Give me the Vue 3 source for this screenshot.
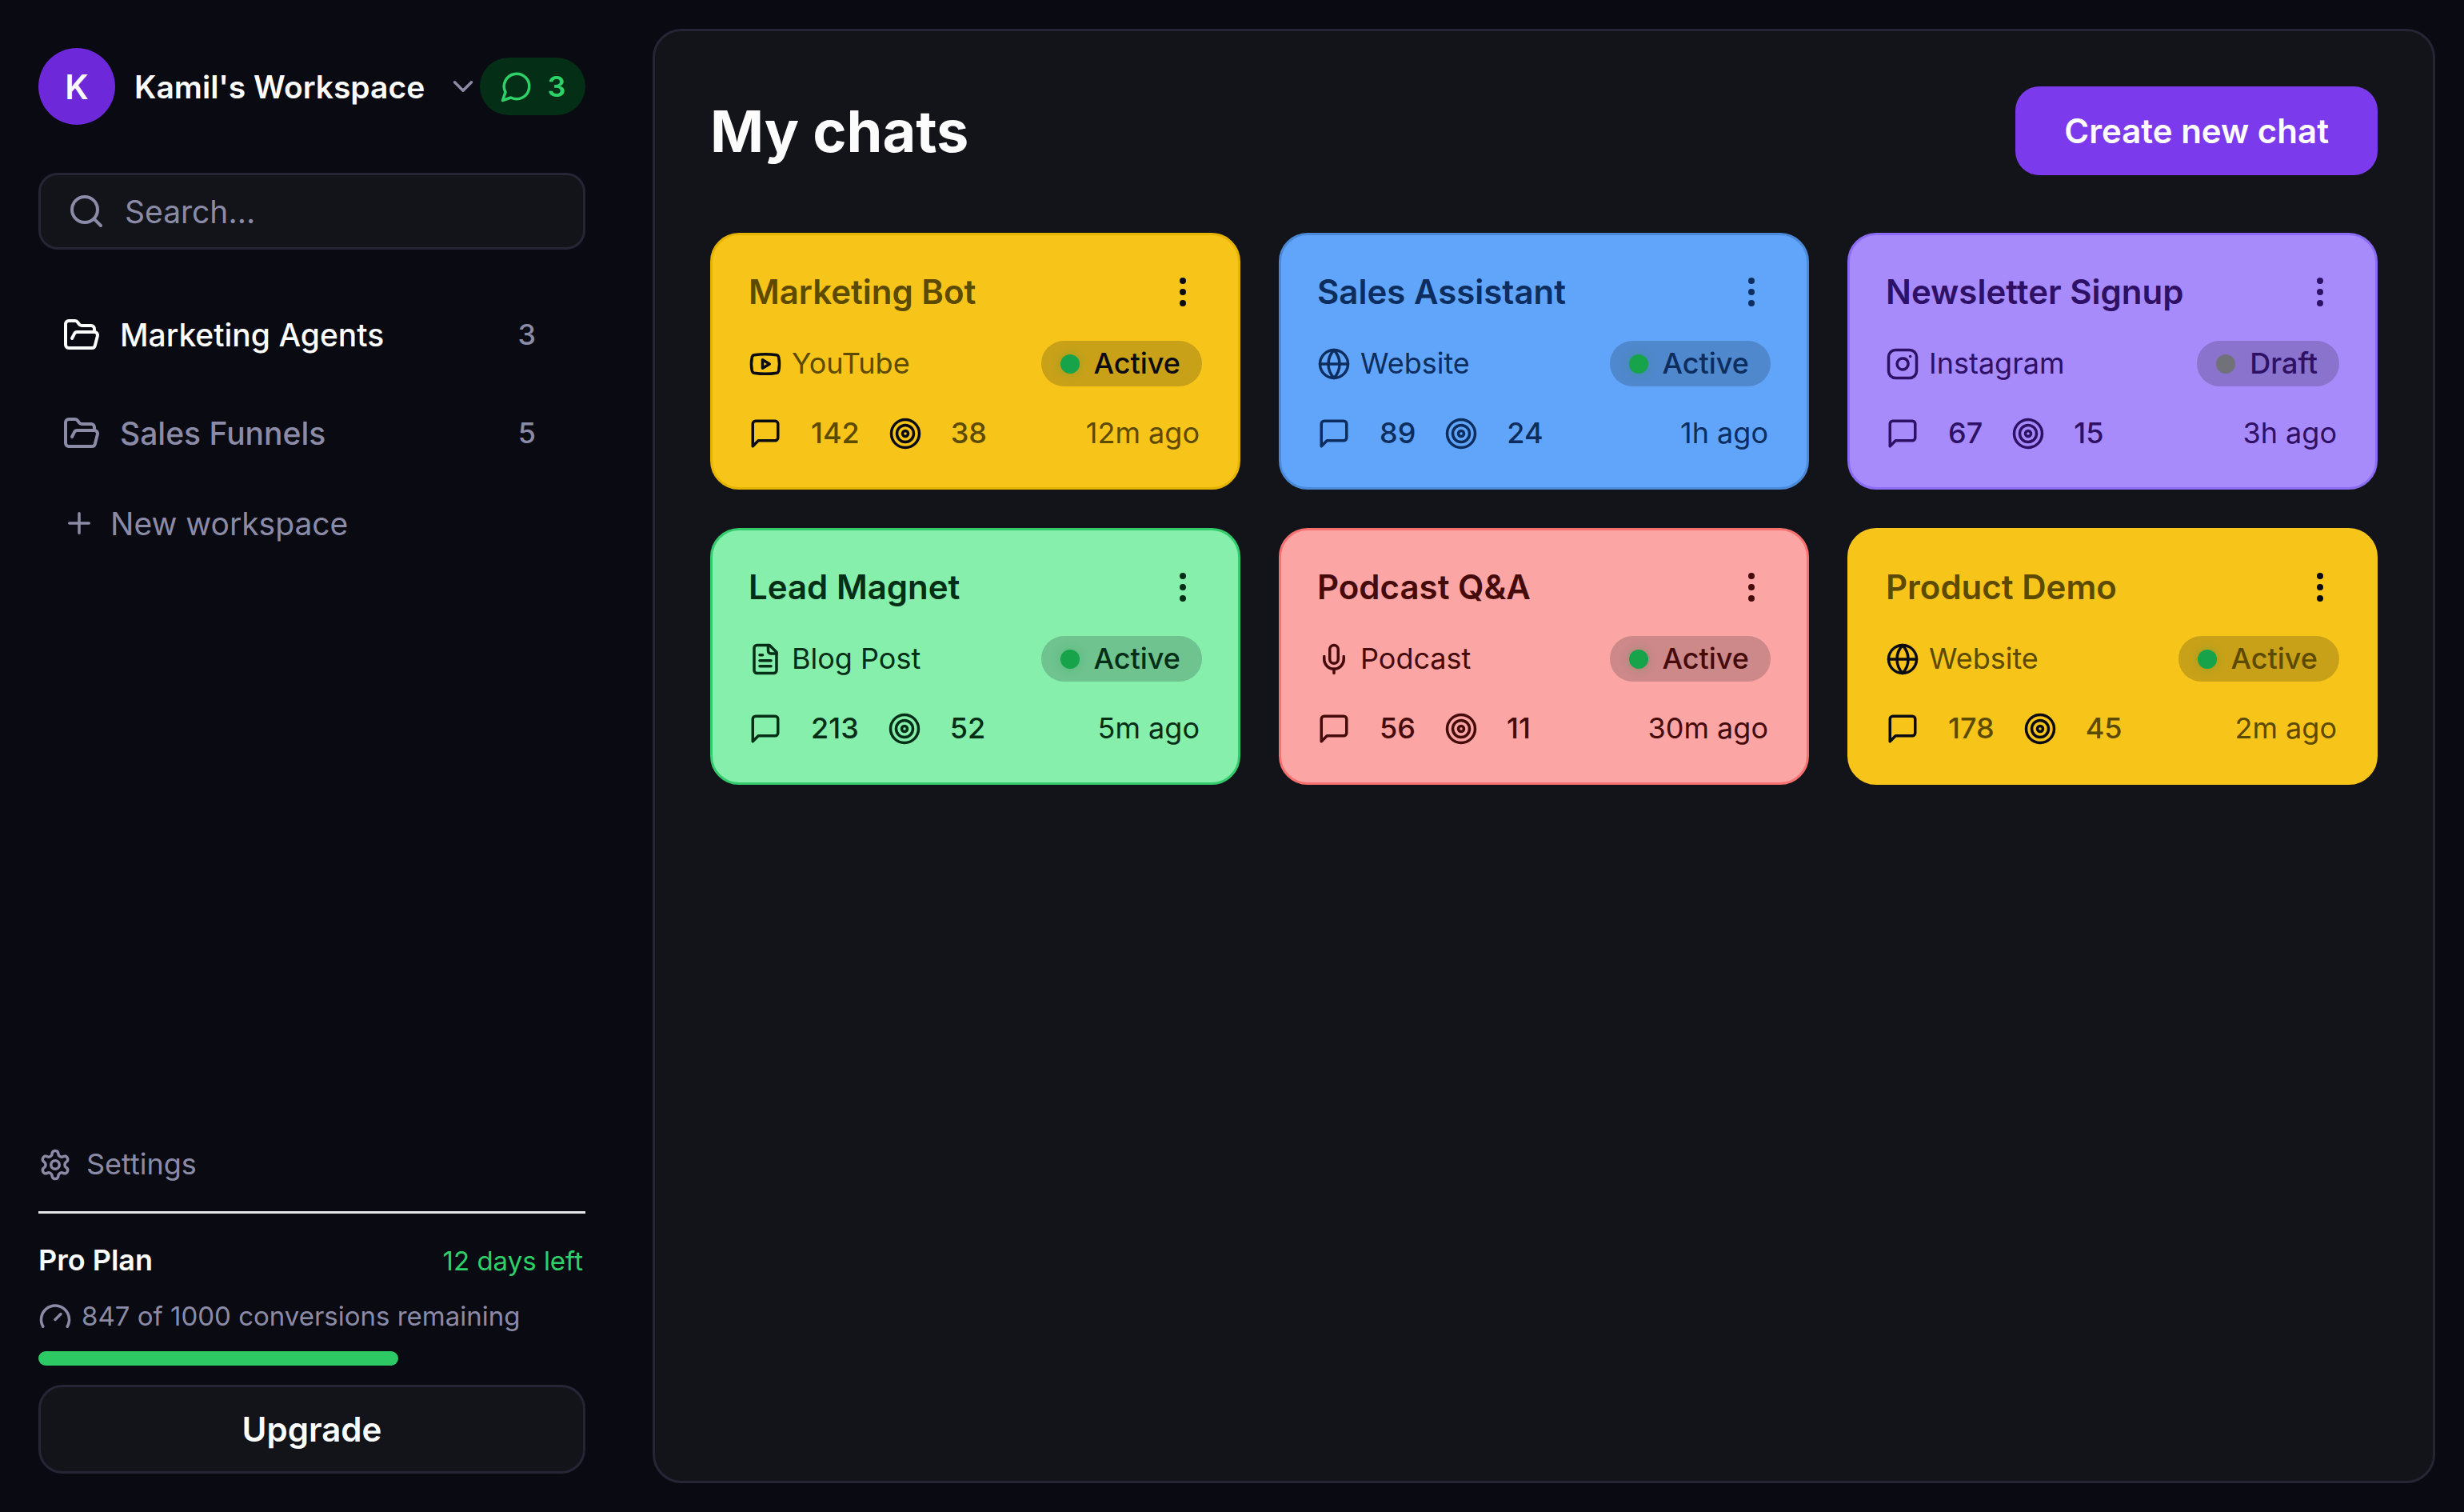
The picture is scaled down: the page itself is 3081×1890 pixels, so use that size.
<template>
  <div class="app">
    <aside class="sidebar">
      <div class="workspace">
        <button class="workspace-switch" type="button">
          <span class="avatar">K</span>
          <span class="workspace-name">Kamil's Workspace</span>
          <svg class="icon chevron" viewBox="0 0 24 24" aria-hidden="true"><path d="m6 9 6 6 6-6" /></svg>
        </button>
        <button class="inbox" type="button" aria-label="3 open chats">
          <svg class="icon" viewBox="0 0 24 24" aria-hidden="true"><path d="M7.9 20A9 9 0 1 0 4 16.1L2 22Z" /></svg>
          <span>3</span>
        </button>
      </div>

      <label class="search">
        <svg class="icon icon-lg" viewBox="0 0 24 24" aria-hidden="true">
          <circle cx="11" cy="11" r="8" />
          <path d="m21 21-4.3-4.3" />
        </svg>
        <input v-model="query" type="search" placeholder="Search..." aria-label="Search" />
      </label>

      <nav class="nav">
        <a
          v-for="folder in folders"
          :key="folder.name"
          href="#"
          class="nav-item"
          :class="{ current: folder.name === currentFolder }"
          @click.prevent="currentFolder = folder.name"
        >
          <svg class="icon icon-lg" viewBox="0 0 24 24" aria-hidden="true">
            <path d="m6 14 1.5-2.9A2 2 0 0 1 9.24 10H20a2 2 0 0 1 1.94 2.5l-1.54 6a2 2 0 0 1-1.95 1.5H4a2 2 0 0 1-2-2V5a2 2 0 0 1 2-2h3.9a2 2 0 0 1 1.69.9l.81 1.2a2 2 0 0 0 1.67.9H18a2 2 0 0 1 2 2v2" />
          </svg>
          <span class="nav-label">{{ folder.name }}</span>
          <span class="nav-count">{{ folder.count }}</span>
        </a>
        <button class="nav-new" type="button">
          <svg class="icon" viewBox="0 0 24 24" aria-hidden="true"><path d="M5 12h14M12 5v14" /></svg>
          <span>New workspace</span>
        </button>
      </nav>

      <div class="sidebar-bottom">
        <a class="settings" href="#">
          <svg class="icon" viewBox="0 0 24 24" aria-hidden="true">
            <path d="M12.22 2h-.44a2 2 0 0 0-2 2v.18a2 2 0 0 1-1 1.73l-.43.25a2 2 0 0 1-2 0l-.15-.08a2 2 0 0 0-2.73.73l-.22.38a2 2 0 0 0 .73 2.73l.15.1a2 2 0 0 1 1 1.72v.51a2 2 0 0 1-1 1.74l-.15.09a2 2 0 0 0-.73 2.73l.22.38a2 2 0 0 0 2.73.73l.15-.08a2 2 0 0 1 2 0l.43.25a2 2 0 0 1 1 1.73V20a2 2 0 0 0 2 2h.44a2 2 0 0 0 2-2v-.18a2 2 0 0 1 1-1.73l.43-.25a2 2 0 0 1 2 0l.15.08a2 2 0 0 0 2.73-.73l.22-.39a2 2 0 0 0-.73-2.73l-.15-.08a2 2 0 0 1-1-1.74v-.5a2 2 0 0 1 1-1.74l.15-.09a2 2 0 0 0 .73-2.73l-.22-.38a2 2 0 0 0-2.73-.73l-.15.08a2 2 0 0 1-2 0l-.43-.25a2 2 0 0 1-1-1.73V4a2 2 0 0 0-2-2z" />
            <circle cx="12" cy="12" r="3" />
          </svg>
          <span>Settings</span>
        </a>
        <div class="plan">
          <div class="plan-head">
            <span class="plan-name">Pro Plan</span>
            <span class="plan-days">12 days left</span>
          </div>
          <div class="plan-usage">
            <svg class="icon" viewBox="0 0 24 24" aria-hidden="true">
              <path d="m12 14 4-4M3.34 19a10 10 0 1 1 17.32 0" />
            </svg>
            <span>847 of 1000 conversions remaining</span>
          </div>
          <div class="plan-bar"><div class="plan-bar-fill" :style="{ width: usage + '%' }"></div></div>
          <button class="upgrade" type="button">Upgrade</button>
        </div>
      </div>
    </aside>

    <main class="panel">
      <header class="panel-head">
        <h1>My chats</h1>
        <button class="create" type="button">Create new chat</button>
      </header>

      <section class="grid">
        <article v-for="chat in chats" :key="chat.title" class="card" :class="chat.theme">
          <div class="row">
            <h2>{{ chat.title }}</h2>
            <button class="more" type="button" :aria-label="'Options for ' + chat.title">
              <svg class="icon icon-lg" viewBox="0 0 24 24" aria-hidden="true">
                <circle cx="12" cy="5" r="1" />
                <circle cx="12" cy="12" r="1" />
                <circle cx="12" cy="19" r="1" />
              </svg>
            </button>
          </div>
          <div class="row">
            <div class="source">
              <svg class="icon" viewBox="0 0 24 24" aria-hidden="true">
                <path v-for="d in sourceIcons[chat.icon]" :key="d" :d="d" />
              </svg>
              <span>{{ chat.source }}</span>
            </div>
            <span class="status" :class="[chat.status.toLowerCase(), { strong: chat.strong }]">
              <i class="dot"></i>{{ chat.status }}
            </span>
          </div>
          <div class="row">
            <div class="stats">
              <svg class="icon" viewBox="0 0 24 24" aria-hidden="true">
                <path d="M21 15a2 2 0 0 1-2 2H7l-4 4V5a2 2 0 0 1 2-2h14a2 2 0 0 1 2 2z" />
              </svg>
              <span>{{ chat.messages }}</span>
              <svg class="icon" viewBox="0 0 24 24" aria-hidden="true">
                <circle cx="12" cy="12" r="10" />
                <circle cx="12" cy="12" r="6" />
                <circle cx="12" cy="12" r="2" />
              </svg>
              <span>{{ chat.goals }}</span>
            </div>
            <span class="time">{{ chat.time }}</span>
          </div>
        </article>
      </section>
    </main>
  </div>
</template>

<script setup>
import { ref } from 'vue'

const query = ref('')
const currentFolder = ref('Marketing Agents')
const usage = ref(65.8)

const folders = [
  { name: 'Marketing Agents', count: 3 },
  { name: 'Sales Funnels', count: 5 }
]

const chats = [
  { title: 'Marketing Bot', source: 'YouTube', icon: 'youtube', status: 'Active', messages: 142, goals: 38, time: '12m ago', theme: 'yellow', strong: true },
  { title: 'Sales Assistant', source: 'Website', icon: 'globe', status: 'Active', messages: 89, goals: 24, time: '1h ago', theme: 'blue' },
  { title: 'Newsletter Signup', source: 'Instagram', icon: 'instagram', status: 'Draft', messages: 67, goals: 15, time: '3h ago', theme: 'purple' },
  { title: 'Lead Magnet', source: 'Blog Post', icon: 'file', status: 'Active', messages: 213, goals: 52, time: '5m ago', theme: 'green' },
  { title: 'Podcast Q&A', source: 'Podcast', icon: 'mic', status: 'Active', messages: 56, goals: 11, time: '30m ago', theme: 'red' },
  { title: 'Product Demo', source: 'Website', icon: 'globe', status: 'Active', messages: 178, goals: 45, time: '2m ago', theme: 'yellow flat' }
]

const sourceIcons = {
  youtube: [
    'M2.5 17a24.12 24.12 0 0 1 0-10 2 2 0 0 1 1.4-1.4 49.56 49.56 0 0 1 16.2 0A2 2 0 0 1 21.5 7a24.12 24.12 0 0 1 0 10 2 2 0 0 1-1.4 1.4 49.55 49.55 0 0 1-16.2 0A2 2 0 0 1 2.5 17',
    'm10 15 5-3-5-3z'
  ],
  globe: [
    'M12 2a10 10 0 1 0 0 20 10 10 0 0 0 0-20z',
    'M12 2a14.5 14.5 0 0 0 0 20 14.5 14.5 0 0 0 0-20',
    'M2 12h20'
  ],
  instagram: [
    'M7 2h10a5 5 0 0 1 5 5v10a5 5 0 0 1-5 5H7a5 5 0 0 1-5-5V7a5 5 0 0 1 5-5z',
    'M16 11.37A4 4 0 1 1 12.63 8 4 4 0 0 1 16 11.37z',
    'M17.5 6.5h.01'
  ],
  file: [
    'M15 2H6a2 2 0 0 0-2 2v16a2 2 0 0 0 2 2h12a2 2 0 0 0 2-2V7Z',
    'M14 2v4a2 2 0 0 0 2 2h4',
    'M10 9H8',
    'M16 13H8',
    'M16 17H8'
  ],
  mic: [
    'M12 2a3 3 0 0 0-3 3v7a3 3 0 0 0 6 0V5a3 3 0 0 0-3-3Z',
    'M19 10v2a7 7 0 0 1-14 0v-2',
    'M12 19v3'
  ]
}
</script>

<style>
body {
  margin: 0;
  background: #090a12;
}
</style>

<style scoped>
.app {
  display: flex;
  box-sizing: border-box;
  min-height: 100vh;
  background: #090a12;
  color: #fcfcfc;
  font-family: Inter, sans-serif;
  font-size: 36px;
  line-height: 45px;
}

.app * {
  box-sizing: border-box;
}

button,
input {
  font: inherit;
  color: inherit;
  margin: 0;
  padding: 0;
  border: 0;
  background: none;
}

button {
  cursor: pointer;
}

a {
  color: inherit;
  text-decoration: none;
}

.icon {
  display: block;
  flex: none;
  width: 42px;
  height: 42px;
  fill: none;
  stroke: currentColor;
  stroke-width: 2;
  stroke-linecap: round;
  stroke-linejoin: round;
}

.icon-lg {
  width: 48px;
  height: 48px;
}

/* sidebar */
.sidebar {
  display: flex;
  flex-direction: column;
  flex: none;
  width: 780px;
  padding: 60px 48px 48px;
}

.workspace {
  display: flex;
  align-items: center;
  justify-content: space-between;
}

.workspace-switch {
  display: flex;
  align-items: center;
  flex: 1;
  gap: 24px;
}

.avatar {
  display: flex;
  align-items: center;
  justify-content: center;
  width: 96px;
  height: 96px;
  border-radius: 50%;
  background: #6d28d9;
  font-size: 42px;
  font-weight: 600;
}

.workspace-name {
  flex: 1;
  font-size: 39px;
  font-weight: 600;
  text-align: left;
  white-space: nowrap;
}

.chevron {
  color: #8b8ba7;
}

.inbox {
  display: flex;
  align-items: center;
  justify-content: center;
  gap: 18px;
  min-width: 132px;
  height: 72px;
  border-radius: 36px;
  background: #052e16;
  color: #2dd168;
  font-weight: 600;
}

.search {
  display: flex;
  align-items: center;
  gap: 24px;
  height: 96px;
  margin-top: 60px;
  padding: 0 33px;
  border: 3px solid #252536;
  border-radius: 24px;
  background: #131419;
  color: #8b8ba7;
  font-size: 39px;
}

.search input {
  flex: 1;
  min-width: 0;
  outline: none;
  color: #fcfcfc;
}

.search input::placeholder {
  color: #8b8ba7;
  opacity: 1;
}

.nav {
  display: flex;
  flex-direction: column;
  margin-top: 48px;
  color: #8b8ba7;
  font-size: 39px;
}

.nav-item {
  display: flex;
  align-items: center;
  gap: 24px;
  height: 117px;
  margin-bottom: 6px;
  padding: 0 62px 0 30px;
  font-weight: 500;
}

.nav-item.current {
  color: #fcfcfc;
}

.nav-label {
  flex: 1;
}

.nav-count {
  color: #8b8ba7;
  font-size: 36px;
}

.nav-new {
  display: flex;
  align-items: center;
  gap: 18px;
  height: 96px;
  padding: 0 30px;
}

.sidebar-bottom {
  margin-top: auto;
}

.settings {
  display: flex;
  align-items: center;
  gap: 18px;
  padding-bottom: 36px;
  color: #8b8ba7;
}

.plan {
  padding-top: 36px;
  border-top: 3px solid #e5e7eb;
}

.plan-head {
  display: flex;
  align-items: baseline;
  justify-content: space-between;
}

.plan-name {
  font-weight: 600;
}

.plan-days {
  padding-right: 3px;
  color: #2dd168;
  font-size: 33px;
}

.plan-usage {
  display: flex;
  align-items: center;
  gap: 12px;
  margin-top: 24px;
  color: #8b8ba7;
  font-size: 33px;
}

.plan-bar {
  height: 18px;
  margin-top: 21px;
}

.plan-bar-fill {
  height: 100%;
  border-radius: 9px;
  background: #2cc964;
}

.upgrade {
  width: 100%;
  height: 111px;
  margin-top: 24px;
  border: 3px solid #252536;
  border-radius: 30px;
  background: #131419;
  font-size: 42px;
  font-weight: 600;
}

/* chats panel */
.panel {
  flex: 1;
  min-width: 0;
  margin: 36px;
  padding: 69px;
  border: 3px solid #252536;
  border-radius: 36px;
  background: #131419;
}

.panel-head {
  display: flex;
  align-items: center;
  justify-content: space-between;
}

h1,
h2 {
  margin: 0;
  font-weight: 600;
}

h1 {
  font-size: 72px;
  font-weight: 700;
  line-height: 84px;
}

.create {
  height: 111px;
  padding: 0 61px;
  border-radius: 30px;
  background: #7c3aed;
  font-size: 42px;
  font-weight: 600;
}

.grid {
  display: grid;
  grid-template-columns: repeat(3, minmax(0, 1fr));
  gap: 48px;
  margin-top: 72px;
}

.card {
  display: flex;
  flex-direction: column;
  gap: 36px;
  padding: 45px;
  border: 3px solid;
  border-radius: 36px;
}

.row {
  display: flex;
  align-items: center;
  justify-content: space-between;
}

h2 {
  font-size: 42px;
  line-height: 51px;
}

.source {
  display: flex;
  align-items: center;
  gap: 12px;
}

.status {
  display: flex;
  align-items: center;
  gap: 18px;
  height: 57px;
  padding: 0 27px 0 24px;
  border-radius: 29px;
  background: rgba(19, 20, 24, 0.2);
  font-weight: 500;
}

.dot {
  width: 24px;
  height: 24px;
  border-radius: 50%;
  background: #71717a;
}

.status.active .dot {
  background: #16a34a;
  box-shadow: 0 0 12px rgba(22, 163, 74, 0.3);
}

.status.strong {
  color: #090a12;
}

.stats {
  display: flex;
  align-items: center;
  gap: 36px;
  font-weight: 500;
}

.time {
  padding-right: 3px;
}

.yellow {
  border-color: #e5b300;
  background: #f7c51a;
  color: #5c4a00;
}

.yellow .icon {
  color: #090a12;
}

.yellow.flat {
  border-color: #f7c51a;
}

.blue {
  border-color: #4a8ad8;
  background: #60a5fa;
  color: #0c2d5e;
}

.purple {
  border-color: #8b6cf6;
  background: #a78bfa;
  color: #2e1065;
}

.green {
  border-color: #34cb6c;
  background: #86efac;
  color: #052e16;
}

.red {
  border-color: #f87171;
  background: #fca5a5;
  color: #450a0a;
}
</style>
